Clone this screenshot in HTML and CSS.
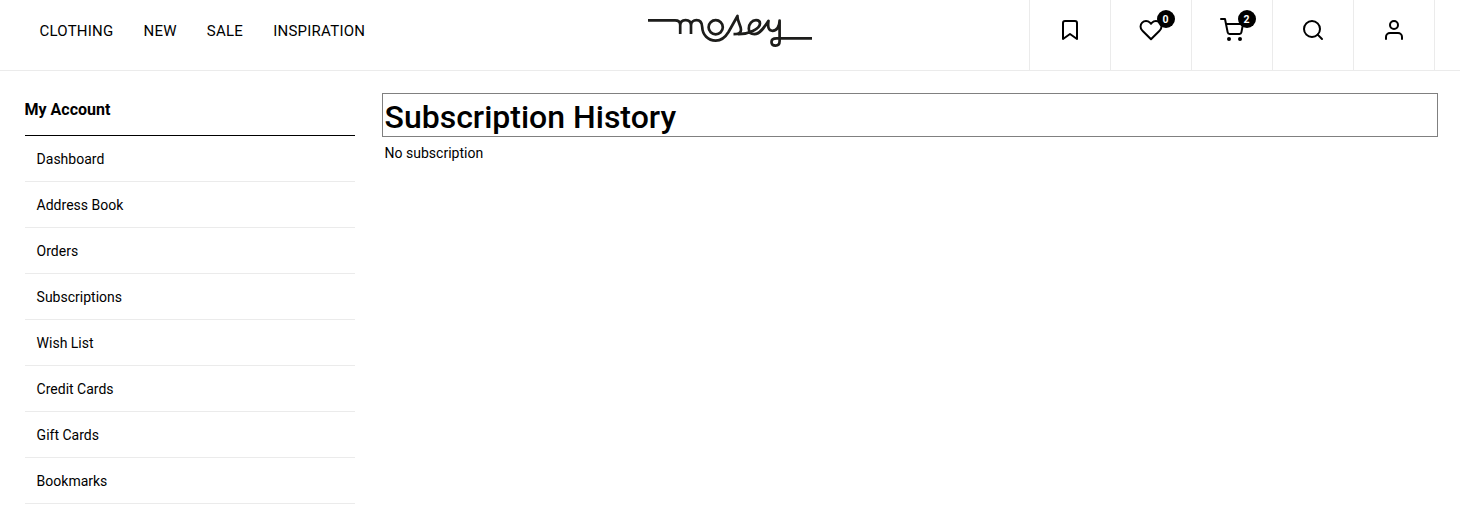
FILE: index.html
```html
<!DOCTYPE html>
<html lang="en">
<head>
<meta charset="utf-8">
<title>Subscription History</title>
<link rel="stylesheet" href="styles.css">
</head>
<body>
<header class="header">
  <nav class="nav">
    <a>CLOTHING</a><a>NEW</a><a>SALE</a><a>INSPIRATION</a>
  </nav>
  <a class="logo" aria-label="mosey">
    <svg width="166" height="36" viewBox="647 12 166 36">
      <path d="M648 20.400H675C678.500 20.400 680.200 22.500 680.200 25V34M680.200 25.500C680.200 22 682.500 20.200 685.600 20.200S691 22 691 25.500V34M691 25.500C691 22 693.500 20.200 696.500 20.200C700.500 20.200 702 23 702.200 27C702.500 35 708 40.600 715.700 40.600C722 40.600 725.500 37 728.500 32L737.500 16C737 21 741 25 741 30C741 33.500 738 34.200 733.500 34.200M738 34.200C748 34.500 760 29 760 23.500C760 21 758 20.200 756 20.200C752 20.200 748.800 24 748.800 28.500C748.800 32 751 34.200 754.500 34.200C760 34.200 764.500 27 768.500 20.800C767.500 27 768.500 30.800 772.500 30.800C777 30.800 779.500 26 779.600 20.500V41C779.600 44 778 45.600 775.600 45.600C773 45.600 771.500 44 771.500 42C771.500 39.500 773.500 38.400 776.500 38.400H812"/>
      <circle cx="715.700" cy="27.200" r="7.100"/>
    </svg>
  </a>
  <div class="tools">
    <a class="tool"><svg class="icon" viewBox="0 0 24 24"><path d="M19 21l-7-5-7 5V5a2 2 0 0 1 2-2h10a2 2 0 0 1 2 2z"/></svg></a>
    <a class="tool"><svg class="icon" viewBox="0 0 24 24"><path d="M20.840 4.610a5.500 5.500 0 0 0-7.780 0L12 5.670l-1.060-1.060a5.500 5.500 0 0 0-7.780 7.780l1.060 1.060L12 21.230l7.780-7.780 1.060-1.060a5.500 5.500 0 0 0 0-7.780z"/></svg><span class="badge">0</span></a>
    <a class="tool"><svg class="icon" viewBox="0 0 24 24"><circle cx="9" cy="21" r="1"/><circle cx="20" cy="21" r="1"/><path d="M1 1h4l2.680 13.390a2 2 0 0 0 2 1.610h9.720a2 2 0 0 0 2-1.610L23 6H6"/></svg><span class="badge">2</span></a>
    <a class="tool"><svg class="icon" viewBox="0 0 24 24"><circle cx="11" cy="11" r="8"/><path d="M21 21l-4.350-4.350"/></svg></a>
    <a class="tool"><svg class="icon" viewBox="0 0 24 24"><path d="M20 21v-2a4 4 0 0 0-4-4H8a4 4 0 0 0-4 4v2"/><circle cx="12" cy="7" r="4"/></svg></a>
  </div>
</header>
<div class="page">
  <aside class="sidebar">
    <h2 class="sidebar-title">My Account</h2>
    <ul class="menu">
      <li>Dashboard</li>
      <li>Address Book</li>
      <li>Orders</li>
      <li>Subscriptions</li>
      <li>Wish List</li>
      <li>Credit Cards</li>
      <li>Gift Cards</li>
      <li>Bookmarks</li>
    </ul>
  </aside>
  <main class="content">
    <h1 class="title">Subscription History</h1>
    <p class="empty">No subscription</p>
  </main>
</div>
</body>
</html>
```

FILE: styles.css
```css
* { box-sizing: border-box; }
body {
  margin: 0;
  background: #fff;
  color: #000;
  font-family: Roboto, "Liberation Sans", sans-serif;
  font-size: 14px;
  overflow: hidden;
}
.header {
  display: grid;
  grid-template-columns: 1fr 166px 1fr;
  height: 71px;
  border-bottom: 1px solid #ebebeb;
}
.nav {
  display: flex;
  gap: 30px;
  padding: 21px 0 0 39.400px;
  font-size: 15px;
  letter-spacing: 0.250px;
  line-height: 20px;
}
.logo { padding-top: 12px; }
.logo svg {
  display: block;
  fill: none;
  stroke: #1d1d1b;
  stroke-width: 2.700;
  stroke-linejoin: round;
}
.tools {
  display: flex;
  justify-content: flex-end;
  padding-right: 25px;
}
.tool {
  position: relative;
  width: 81px;
  padding: 18px 0 0 28px;
  border-left: 1px solid #ebebeb;
}
.tool:last-child {
  width: 82px;
  border-right: 1px solid #ebebeb;
}
.icon {
  display: block;
  width: 24px;
  height: 24px;
  fill: none;
  stroke: #000;
  stroke-width: 2;
  stroke-linecap: round;
  stroke-linejoin: round;
}
.badge {
  position: absolute;
  left: 46px;
  top: 10px;
  width: 18px;
  height: 18px;
  padding-right: 1px;
  border-radius: 50%;
  background: #000;
  color: #fff;
  font-size: 10.500px;
  font-weight: 700;
  line-height: 19px;
  text-align: center;
}
.page {
  display: flex;
  gap: 27px;
  padding: 22px 22px 0 25px;
}
.sidebar { width: 330px; }
.sidebar-title {
  height: 43px;
  margin: 0;
  padding-top: 6px;
  border-bottom: 1px solid #000;
  font-size: 16px;
  font-weight: 700;
  line-height: 21px;
  text-indent: -0.500px;
}
.menu {
  margin: 0;
  padding: 0;
  list-style: none;
}
.menu li {
  height: 46px;
  padding-left: 11.600px;
  border-bottom: 1px solid #ebebeb;
  line-height: 46px;
}
.content { flex: 1; }
.title {
  height: 44px;
  margin: 0;
  padding-left: 1.500px;
  border: 1px solid #808080;
  font-size: 32px;
  font-weight: 500;
  line-height: 46px;
}
.empty {
  margin: 6px 0 0 2.600px;
  line-height: 20px;
}
```
